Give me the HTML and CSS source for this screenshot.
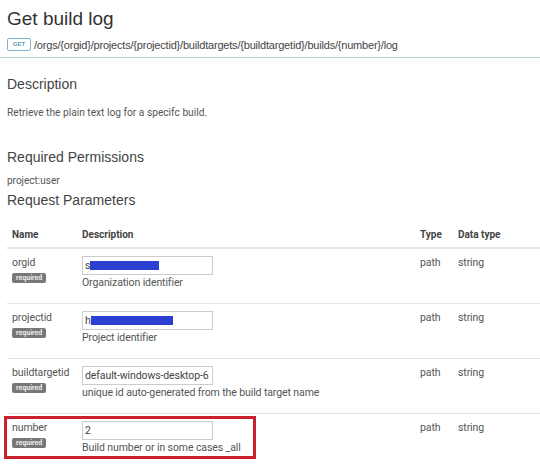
FILE: index.html
```html
<!DOCTYPE html>
<html lang="en">
<head>
    <meta charset="UTF-8">
    <title>Get build log</title>
    <link rel="stylesheet" href="styles.css">
</head>
<body>
    <div class="header">
        <h1>Get build log</h1>
        <div class="endpoint">
            <span class="method">GET</span>
            <span class="path">/orgs/{orgid}/projects/{projectid}/buildtargets/{buildtargetid}/builds/{number}/log</span>
        </div>
    </div>

    <div class="content">
        <h2 class="desc-title">Description</h2>
        <p class="desc">Retrieve the plain text log for a specifc build.</p>

        <h2 class="perm-title">Required Permissions</h2>
        <p class="perm">project:user</p>

        <h2 class="param-title">Request Parameters</h2>

        <table class="params">
            <thead>
                <tr>
                    <th class="col-name">Name</th>
                    <th class="col-desc">Description</th>
                    <th class="col-type">Type</th>
                    <th class="col-data">Data type</th>
                </tr>
            </thead>
            <tbody>
                <tr>
                    <td class="col-name">orgid<br><span class="req">required</span></td>
                    <td class="col-desc">
                        <div class="field">s<span class="redact" style="width:69px"></span></div>
                        <div class="hint">Organization identifier</div>
                    </td>
                    <td class="col-type">path</td>
                    <td class="col-data">string</td>
                </tr>
                <tr>
                    <td class="col-name">projectid<br><span class="req">required</span></td>
                    <td class="col-desc">
                        <div class="field">h<span class="redact" style="width:82px"></span></div>
                        <div class="hint">Project identifier</div>
                    </td>
                    <td class="col-type">path</td>
                    <td class="col-data">string</td>
                </tr>
                <tr>
                    <td class="col-name">buildtargetid<br><span class="req">required</span></td>
                    <td class="col-desc">
                        <div class="field">default-windows-desktop-6</div>
                        <div class="hint">unique id auto-generated from the build target name</div>
                    </td>
                    <td class="col-type">path</td>
                    <td class="col-data">string</td>
                </tr>
                <tr class="marked">
                    <td class="col-name"><div class="highlight"></div>number<br><span class="req">required</span></td>
                    <td class="col-desc">
                        <div class="field">2</div>
                        <div class="hint">Build number or in some cases _all</div>
                    </td>
                    <td class="col-type">path</td>
                    <td class="col-data">string</td>
                </tr>
            </tbody>
        </table>
    </div>
</body>
</html>
```

FILE: styles.css
```css
body {
    margin: 0;
    background-color: #fff;
    color: #444;
    font-family: Roboto, "Liberation Sans", Arial, sans-serif;
    overflow: hidden;
}
.header {
    padding: 8px 0 6px 7px;
    border-bottom: 1px solid #b9cbd4;
}
h1 {
    margin: 0;
    font-family: "Liberation Sans", Arial, sans-serif;
    font-weight: normal;
    font-size: 19px;
    line-height: 22px;
    color: #333;
}
.endpoint {
    display: flex;
    align-items: center;
    margin-top: 8px;
    height: 13px;
}
.method {
    display: inline-block;
    box-sizing: border-box;
    width: 24px;
    height: 13px;
    border: 1px solid #7fb4cf;
    border-radius: 2px;
    color: #5a9bc0;
    font-family: "Liberation Sans", Arial, sans-serif;
    font-size: 6px;
    font-weight: bold;
    line-height: 11px;
    text-align: center;
}
.path {
    margin-left: 3px;
    font-family: "Liberation Sans", Arial, sans-serif;
    font-size: 11px;
    letter-spacing: -0.2px;
    color: #444;
}
.content {
    padding-left: 7px;
}
h2 {
    margin: 0;
    font-family: "Liberation Sans", Arial, sans-serif;
    font-weight: normal;
    font-size: 14px;
    line-height: 18px;
    color: #444;
}
.desc-title { margin-top: 17px; }
.desc {
    margin: 13px 0 0;
    font-size: 10.2px;
    line-height: 14px;
    color: #555;
}
.perm-title { margin-top: 28px; }
.perm {
    margin: 8px 0 0;
    font-size: 10px;
    line-height: 14px;
    color: #555;
}
.param-title { margin-top: 3px; }

.params {
    width: 533px;
    margin-top: 7px;
    border-collapse: collapse;
    font-size: 10.5px;
    letter-spacing: -0.1px;
    color: #555;
}
.params th {
    text-align: left;
    font-weight: bold;
    font-size: 10px;
    letter-spacing: 0;
    color: #444;
    padding: 13px 0 7px;
    border-bottom: 2px solid #e6e6e6;
}
.params td {
    vertical-align: top;
    padding: 7px 0 0;
    height: 47px;
    border-bottom: 1px solid #e3e3e3;
    line-height: 14px;
}
.col-name { width: 70px; padding-left: 5px !important; }
.col-desc { width: 338px; }
.col-type { width: 38px; }
.params td.col-name { position: relative; }
.req {
    display: inline-block;
    margin-top: 3px;
    padding: 0 4px;
    height: 10px;
    line-height: 10px;
    border-radius: 2px;
    background-color: #777;
    color: #eee;
    font-size: 7px;
    font-weight: bold;
    letter-spacing: 0;
    vertical-align: top;
}
.field {
    box-sizing: border-box;
    display: flex;
    align-items: center;
    width: 131px;
    height: 19px;
    padding-left: 2px;
    border: 1px solid #ccc;
    color: #444;
    white-space: nowrap;
    overflow: hidden;
}
.redact {
    display: inline-block;
    flex: none;
    height: 9px;
    background-color: #2b3fd0;
}
.hint {
    margin-top: 1px;
    color: #555;
}
.marked td { border-bottom: none; }
.highlight {
    position: absolute;
    left: -3px;
    top: 2px;
    width: 252px;
    height: 43px;
    box-sizing: border-box;
    border: 3px solid #c8202c;
    pointer-events: none;
}
```
